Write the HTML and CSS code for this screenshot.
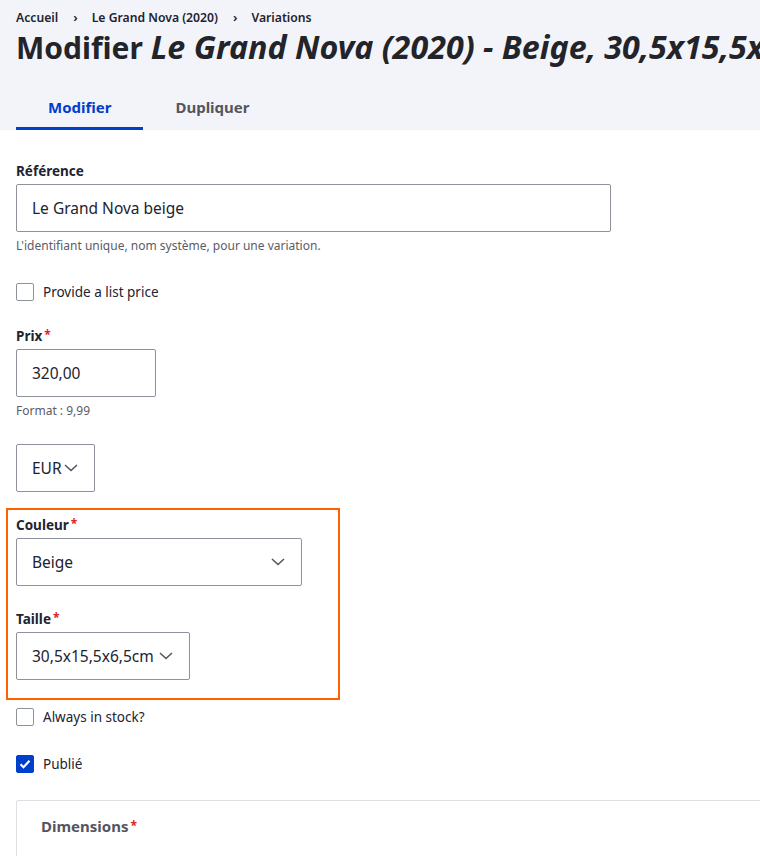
FILE: index.html
```html
<!DOCTYPE html>
<html lang="fr">
<head>
<meta charset="utf-8">
<title>Modifier Le Grand Nova (2020) - Beige</title>
<link rel="stylesheet" href="styles.css">
</head>
<body>
<header class="page-header">
  <nav class="breadcrumb">
    <a class="crumb" href="#">Accueil</a><span class="sep">›</span>
    <a class="crumb" href="#">Le Grand Nova (2020)</a><span class="sep">›</span>
    <a class="crumb" href="#">Variations</a>
  </nav>
  <h1 class="page-title">Modifier <em>Le Grand Nova (2020) - Beige, 30,5x15,5x6,5cm</em></h1>
  <nav class="tabs">
    <a class="tab tab-active" href="#">Modifier</a>
    <a class="tab" href="#">Dupliquer</a>
  </nav>
</header>
<main class="content">
  <div class="field field-sku">
    <label class="label">Référence</label>
    <input class="text-input input-wide" type="text" value="Le Grand Nova beige">
    <div class="desc">L'identifiant unique, nom système, pour une variation.</div>
  </div>

  <div class="check-row check-list-price">
    <span class="checkbox"></span><span class="check-label">Provide a list price</span>
  </div>

  <div class="field field-price">
    <label class="label">Prix<span class="req">*</span></label>
    <input class="text-input input-price" type="text" value="320,00">
    <div class="desc">Format : 9,99</div>
  </div>

  <div class="select select-eur"><span>EUR</span>
    <svg class="chev" width="14" height="8" viewBox="0 0 14 8"><path d="M1 1l6 5.5L13 1" fill="none" stroke="#545560" stroke-width="1.6"/></svg>
  </div>

  <div class="highlight">
    <div class="field field-color">
      <label class="label">Couleur<span class="req">*</span></label>
      <div class="select select-color"><span>Beige</span>
        <svg class="chev" width="14" height="8" viewBox="0 0 14 8"><path d="M1 1l6 5.5L13 1" fill="none" stroke="#545560" stroke-width="1.6"/></svg>
      </div>
    </div>
    <div class="field field-size">
      <label class="label">Taille<span class="req">*</span></label>
      <div class="select select-size"><span>30,5x15,5x6,5cm</span>
        <svg class="chev" width="14" height="8" viewBox="0 0 14 8"><path d="M1 1l6 5.5L13 1" fill="none" stroke="#545560" stroke-width="1.6"/></svg>
      </div>
    </div>
  </div>

  <div class="check-row check-stock">
    <span class="checkbox"></span><span class="check-label">Always in stock?</span>
  </div>

  <div class="check-row check-published">
    <span class="checkbox checkbox-on">
      <svg width="12" height="10" viewBox="0 0 12 10"><path d="M1.5 5.2l3 3L10.5 1.8" fill="none" stroke="#fff" stroke-width="2.2"/></svg>
    </span><span class="check-label">Publié</span>
  </div>

  <section class="card">
    <h2 class="card-title">Dimensions<span class="req">*</span></h2>
  </section>
</main>
</body>
</html>
```

FILE: styles.css
```css
html, body {
  margin: 0;
  padding: 0;
  overflow: hidden;
  background: #fff;
}
body {
  font-family: "Noto Sans", "Open Sans", sans-serif;
  color: #222330;
  width: 760px;
  height: 856px;
}
a { text-decoration: none; color: inherit; }

.page-header {
  background: #f3f4f9;
  padding: 8px 0 0 16px;
  height: 122px;
  box-sizing: content-box;
  overflow: hidden;
}
.breadcrumb {
  display: flex;
  align-items: center;
  height: 18px;
  font-size: 12.2px;
  font-weight: 600;
  color: #222330;
}
.sep {
  padding: 0 14px 0 15px;
  font-size: 13px;
}
.page-title {
  margin: 0;
  height: 44px;
  font-size: 30px;
  line-height: 44px;
  font-weight: 700;
  white-space: nowrap;
  color: #232429;
}
.page-title em {
  font-style: italic;
  font-size: 1.075em;
  line-height: 1;
}
.tabs {
  display: flex;
  margin-top: 17px;
}
.tab {
  display: block;
  padding: 10px 32px 10px;
  line-height: 20px;
  font-size: 15px;
  font-weight: 700;
  color: #545560;
  border-bottom: 3px solid transparent;
}
.tab-active {
  color: #003ecc;
  border-bottom-color: #003ecc;
}

.content {
  padding: 32px 16px 0 16px;
}
.label {
  display: block;
  height: 18px;
  font-size: 13.5px;
  line-height: 18px;
  font-weight: 700;
  margin-bottom: 4px;
}
.req {
  color: #dc2323;
  font-size: 12px;
  line-height: 0;
  margin-left: 2px;
  position: relative;
  top: -2px;
}
.text-input {
  display: block;
  box-sizing: border-box;
  height: 48px;
  margin: 0;
  padding: 0 15px;
  border: 1px solid #8e929c;
  border-radius: 2px;
  font-family: inherit;
  font-size: 15.5px;
  color: #222330;
  background: #fff;
}
.input-wide { width: 595px; }
.input-price { width: 140px; }
.desc {
  margin-top: 6px;
  height: 16px;
  font-size: 12px;
  line-height: 16px;
  color: #5b5c66;
}
.check-row {
  display: flex;
  align-items: center;
  height: 18px;
}
.checkbox {
  box-sizing: border-box;
  width: 18px;
  height: 18px;
  border: 1px solid #8e929c;
  border-radius: 2px;
  background: #fff;
  display: flex;
  align-items: center;
  justify-content: center;
}
.checkbox-on {
  background: #003ecc;
  border-color: #003ecc;
}
.check-label {
  margin-left: 9px;
  font-size: 13.5px;
  line-height: 18px;
}
.check-list-price { margin-top: 29px; }
.field-price { margin-top: 26px; }

.select {
  box-sizing: border-box;
  height: 48px;
  border: 1px solid #8e929c;
  border-radius: 2px;
  display: flex;
  align-items: center;
  justify-content: space-between;
  padding: 0 16px 0 15px;
  font-size: 15.5px;
  background: #fff;
}
.chev { flex: none; }
.select-eur { width: 79px; margin-top: 25px; padding-right: 16px; }
.select-color { width: 286px; }
.select-size { width: 174px; }

.highlight {
  margin: 16px 0 0 -10px;
  width: 334px;
  box-sizing: border-box;
  border: 2px solid #ff6100;
  padding: 6px 8px 18px 8px;
}
.field-size { margin-top: 24px; }

.check-stock { margin-top: 8px; }
.check-published { margin-top: 29px; }

.card {
  margin-top: 27px;
  margin-right: -24px;
  border: 1px solid #dedfe4;
  border-radius: 2px;
  height: 80px;
  padding: 14px 24px;
}
.card-title {
  margin: 0;
  height: 22px;
  font-size: 15px;
  line-height: 22px;
  font-weight: 700;
  color: #545560;
}
```
